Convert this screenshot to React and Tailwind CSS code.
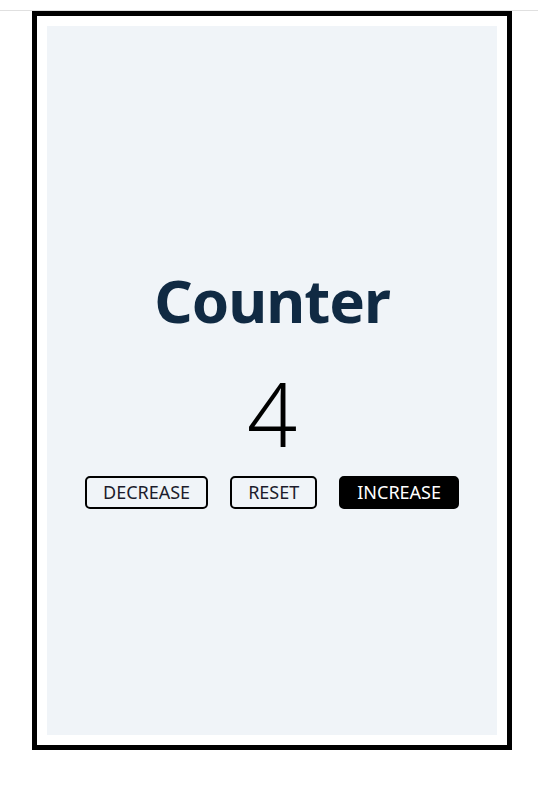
import { useState } from "react";

export default function App() {
  const [count, setCount] = useState(4);

  return (
    <div className="min-h-screen bg-white font-['Noto_Sans',sans-serif]">
      {/* Top rule */}
      <div className="h-[11px] border-b border-[#e0e0e0]" />

      {/* Framed card */}
      <div className="ml-8 w-[480px] h-[739px] border-[5px] border-black bg-white p-[10px]">
        <div className="h-full bg-[#f0f4f8] flex flex-col items-center justify-center pt-[17px]">
          <h1 className="text-[60px] leading-none font-bold tracking-[-1px] text-[#102a43]">
            Counter
          </h1>
          <div className="mt-[39px] text-[88px] leading-none font-light text-black">
            {count}
          </div>

          {/* Actions */}
          <div className="mt-[19px] flex items-center gap-[22px]">
            <button
              onClick={() => setCount(count - 1)}
              className="h-[33px] px-4 border-2 border-black rounded-[5px] text-[18px] leading-none text-[#1c1c2c] bg-transparent"
            >
              DECREASE
            </button>
            <button
              onClick={() => setCount(0)}
              className="h-[33px] px-4 border-2 border-black rounded-[5px] text-[18px] leading-none text-[#1c1c2c] bg-transparent"
            >
              RESET
            </button>
            <button
              onClick={() => setCount(count + 1)}
              className="h-[33px] px-4 border-2 border-black rounded-[5px] text-[18px] leading-none text-white bg-black"
            >
              INCREASE
            </button>
          </div>
        </div>
      </div>
    </div>
  );
}
